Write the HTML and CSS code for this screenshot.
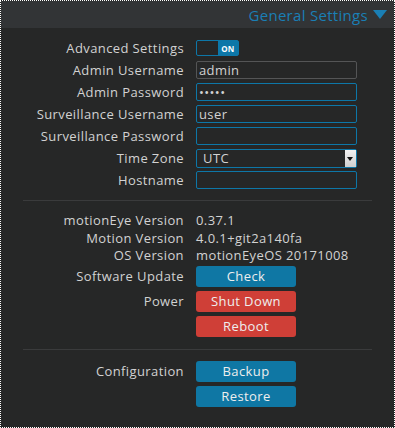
FILE: index.html
```html
<!DOCTYPE html>
<html lang="en">
<head>
    <meta charset="UTF-8">
    <meta name="viewport" content="width=device-width, initial-scale=1.0">
    <title>motionEye - General Settings</title>
    <link rel="stylesheet" href="styles.css">
</head>
<body>
    <div class="panel">
        <div class="header">
            <span class="title">General Settings</span>
            <span class="arrow"></span>
        </div>
        <div class="settings">
            <div class="row">
                <label>Advanced Settings</label>
                <div class="toggle"><span class="off"></span><span class="on">ON</span></div>
            </div>
            <div class="row">
                <label>Admin Username</label>
                <input class="field plain" type="text" value="admin">
            </div>
            <div class="row">
                <label>Admin Password</label>
                <input class="field" type="password" value="admin">
            </div>
            <div class="row">
                <label>Surveillance Username</label>
                <input class="field" type="text" value="user">
            </div>
            <div class="row">
                <label>Surveillance Password</label>
                <input class="field" type="password" value="">
            </div>
            <div class="row">
                <label>Time Zone</label>
                <div class="field select"><span>UTC</span><span class="drop"></span></div>
            </div>
            <div class="row">
                <label>Hostname</label>
                <input class="field" type="text" value="">
            </div>

            <hr class="sep first">

            <div class="row text">
                <label>motionEye Version</label>
                <span class="value">0.37.1</span>
            </div>
            <div class="row text">
                <label>Motion Version</label>
                <span class="value">4.0.1+git2a140fa</span>
            </div>
            <div class="row text">
                <label>OS Version</label>
                <span class="value">motionEyeOS 20171008</span>
            </div>
            <div class="row btnrow">
                <label>Software Update</label>
                <button class="btn">Check</button>
            </div>
            <div class="row btnrow">
                <label>Power</label>
                <button class="btn red">Shut Down</button>
            </div>
            <div class="row btnrow">
                <label></label>
                <button class="btn red">Reboot</button>
            </div>

            <hr class="sep">

            <div class="row btnrow">
                <label>Configuration</label>
                <button class="btn">Backup</button>
            </div>
            <div class="row btnrow">
                <label></label>
                <button class="btn">Restore</button>
            </div>
        </div>
    </div>
</body>
</html>
```

FILE: styles.css
```css
*{
    padding: 0;
    margin: 0;
    box-sizing: border-box;
}
body{
    background-color: #262727;
    font-family: 'Open Sans', sans-serif;
    font-size: 13px;
    letter-spacing: 0.4px;
    color: #d2d2d2;
}
.panel{
    width: 395px;
    height: 428px;
    border: 1px dotted #fff;
    background-color: #262727;
}
.header{
    height: 27px;
    background-color: #323436;
    display: flex;
    justify-content: flex-end;
    align-items: center;
    padding-right: 7px;
    color: #1a7fb5;
    font-size: 15px;
    letter-spacing: 0.3px;
}
.arrow{
    width: 0;
    height: 0;
    margin-left: 5px;
    border-left: 7px solid transparent;
    border-right: 7px solid transparent;
    border-top: 9px solid #1a7fb5;
}
.settings{
    padding-top: 9px;
}
.row{
    display: grid;
    grid-template-columns: 183px 161px;
    column-gap: 12px;
    align-items: center;
    height: 22px;
}
.row label{
    text-align: right;
}
.row.text{
    height: 17.5px;
}
.row.btnrow{
    height: 25px;
}
.field{
    height: 18px;
    border: 1px solid #0d77a8;
    border-radius: 2px;
    background: transparent;
    color: #d2d2d2;
    font-family: 'Open Sans', sans-serif;
    font-size: 13px;
    letter-spacing: 0.4px;
    padding: 0 2px;
    outline: none;
}
.field.plain{
    border-color: #545556;
}
.select{
    display: flex;
    align-items: center;
    justify-content: space-between;
    padding: 0 0 0 6px;
    height: 19px;
}
.drop{
    width: 11px;
    height: 17px;
    background: linear-gradient(#f2f2f2, #cfcfcf);
    position: relative;
}
.drop::after{
    content: "";
    position: absolute;
    left: 2px;
    top: 7px;
    border-left: 3.5px solid transparent;
    border-right: 3.5px solid transparent;
    border-top: 4px solid #111;
}
.toggle{
    display: flex;
    width: 43px;
    height: 16px;
    border: 1px solid #0d77a8;
    border-radius: 2px;
}
.toggle .off{
    flex: 1;
}
.toggle .on{
    flex: 1;
    background-color: #0d77a8;
    color: #fff;
    font-size: 8px;
    font-weight: bold;
    letter-spacing: 0;
    display: flex;
    justify-content: center;
    align-items: center;
}
.sep{
    border: none;
    border-top: 1px solid #3a3b3c;
    margin: 10px 22px 9px 22px;
}
.sep.first{
    margin: 9px 22px 10px 22px;
}
.btn{
    width: 100px;
    height: 21px;
    border: none;
    border-radius: 3px;
    background-color: #0f77a4;
    color: #eee;
    font-family: 'Open Sans', sans-serif;
    font-size: 13px;
    letter-spacing: 0.4px;
}
.btn.red{
    background-color: #cf3f37;
}
```
